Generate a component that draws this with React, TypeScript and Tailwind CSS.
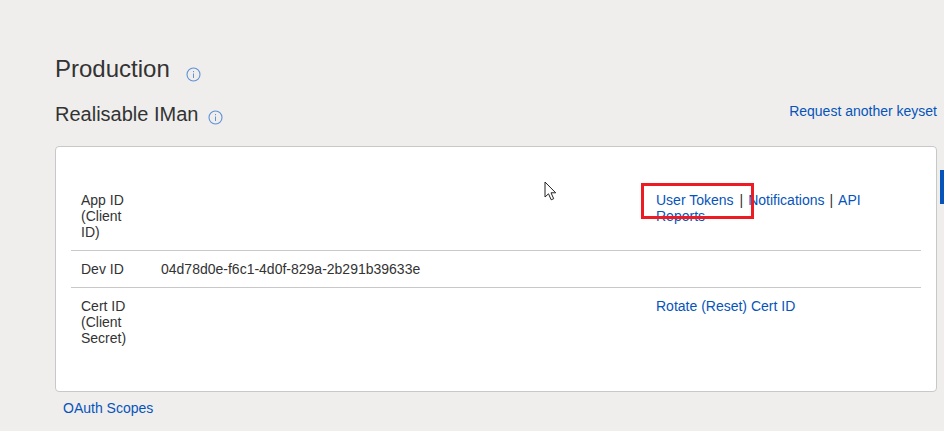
const InfoIcon = () => (
  <svg width="15" height="15" viewBox="0 0 15 15" fill="none" className="shrink-0">
    <circle cx="7.5" cy="7.5" r="6.5" stroke="#5f92d6" strokeWidth="1.1" />
    <path d="M7.5 6.5v4.5" stroke="#5f92d6" strokeWidth="1" />
    <path d="M7.5 4v1.2" stroke="#5f92d6" strokeWidth="1" />
  </svg>
);

const Cursor = () => (
  <svg width="14" height="20" viewBox="0 0 14 20" fill="none">
    <path d="M1 1v15l3.5-3.2 2.7 6 2.5-1.1-2.7-5.9h4.7z" fill="#fff" stroke="#222" strokeWidth="1" />
  </svg>
);

const Link = ({ children }: { children: React.ReactNode }) => (
  <a className="text-[#0654ba]">{children}</a>
);

export default function App() {
  return (
    <div className="relative h-[431px] w-[944px] overflow-hidden bg-[#efeeed] pl-[55px] pr-[7px] pt-[55px] font-['Liberation_Sans',Arial,sans-serif] text-[14px] leading-[16px] text-[#333]">
      <div className="flex h-[28px] items-center">
        <h1 className="text-[24px] leading-[28px] font-normal">Production</h1>
        <span className="ml-[16px] mt-[10px]">
          <InfoIcon />
        </span>
      </div>
      <div className="mt-[19px] flex h-[24px] items-center justify-between">
        <div className="flex items-center">
          <h2 className="text-[20px] leading-[24px] font-normal">Realisable IMan</h2>
          <span className="ml-[10px] mt-[6px]">
            <InfoIcon />
          </span>
        </div>
        <div className="mb-[6px]">
          <Link>Request another keyset</Link>
        </div>
      </div>

      <div className="relative mt-[20px] h-[246px] rounded-[4px] border border-[#c8c8c8] bg-white px-[15px] pt-[37px]">
        <div className="flex h-[67px] border-b border-[#c8c8c8] pt-[8px]">
          <div className="w-[90px] pl-[10px] pr-[30px]">App ID (Client ID)</div>
          <div className="w-[495px]" />
          <div className="w-[240px]">
            <Link>User Tokens</Link>
            <span className="ml-[6px] mr-[5px]">|</span>
            <Link>Notifications</Link>
            <span className="mx-[5px]">|</span>
            <Link>API Reports</Link>
          </div>
        </div>
        <div className="flex h-[37px] items-center border-b border-[#c8c8c8]">
          <div className="w-[90px] pl-[10px]">Dev ID</div>
          <div>04d78d0e-f6c1-4d0f-829a-2b291b39633e</div>
        </div>
        <div className="flex pt-[10px]">
          <div className="w-[90px] pl-[10px] pr-[30px]">Cert ID (Client Secret)</div>
          <div className="w-[495px]" />
          <div>
            <Link>Rotate (Reset) Cert ID</Link>
          </div>
        </div>
      </div>

      <div className="mt-[8px] pl-[8px]">
        <Link>OAuth Scopes</Link>
      </div>

      {/* annotations sitting on top of the page */}
      <div className="absolute left-[641px] top-[183px] h-[36px] w-[113px] border-[3px] border-[#ed1c24]" />
      <div className="absolute left-[544px] top-[181px]">
        <Cursor />
      </div>
      <div className="absolute left-[940px] top-[170px] h-[34px] w-[4px] bg-[#0654ba]" />
    </div>
  );
}
